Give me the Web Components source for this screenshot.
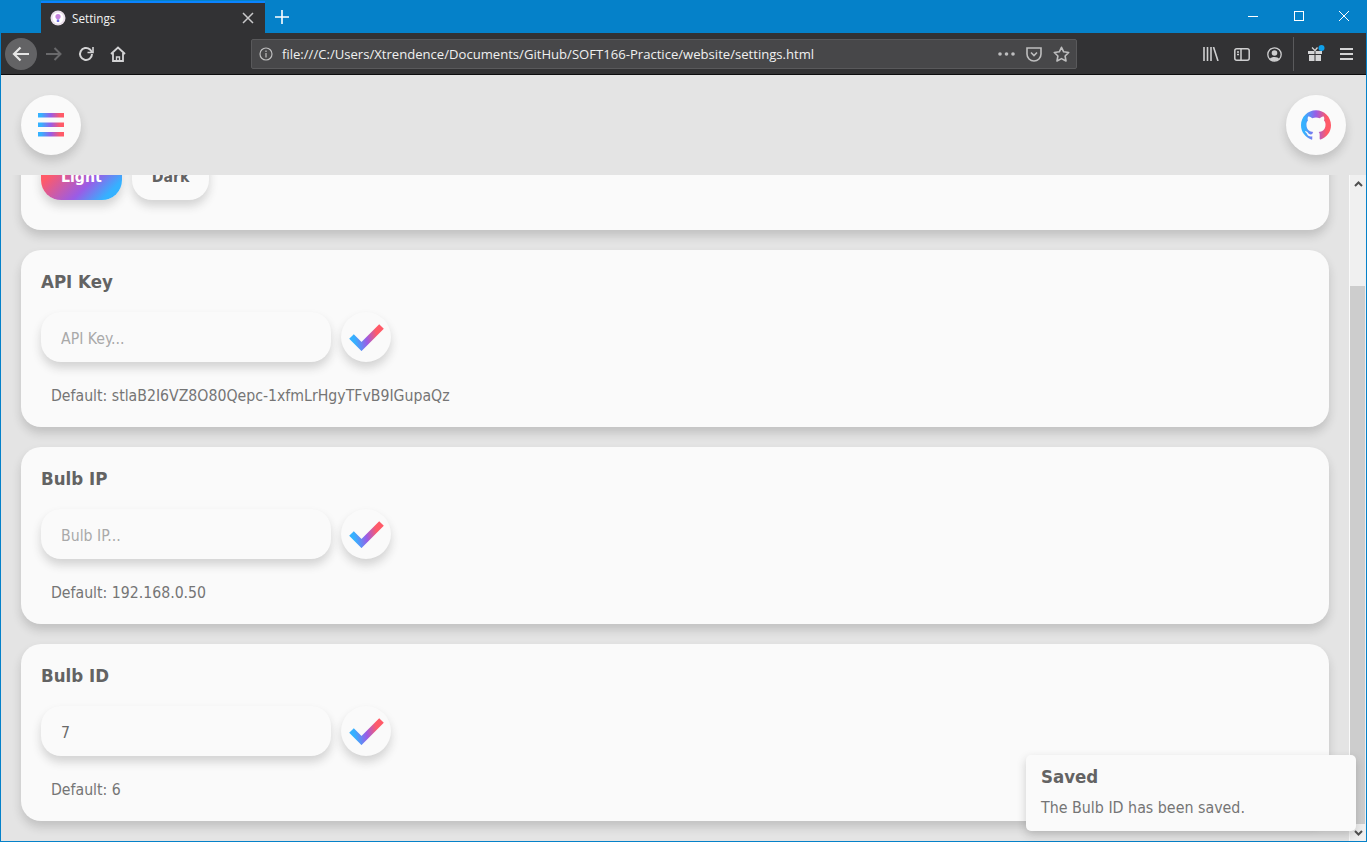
<!DOCTYPE html>
<html lang="en">
<head>
<meta charset="utf-8">
<title>Settings</title>
<style>
    html, body { margin: 0; height: 100%; overflow: hidden; }
    body { font-family: "DejaVu Sans", sans-serif; }
</style>
</head>
<body>

<browser-window>
    <browser-tabs title-text="Settings"></browser-tabs>
    <browser-toolbar url="file:///C:/Users/Xtrendence/Documents/GitHub/SOFT166-Practice/website/settings.html"></browser-toolbar>
    <app-header></app-header>
    <settings-page>
        <settings-card>
            <div class="buttons" style="display:flex;gap:10px">
                <theme-button active>Light</theme-button>
                <theme-button>Dark</theme-button>
            </div>
        </settings-card>
        <settings-card heading="API Key" placeholder="API Key..." hint="Default: stlaB2I6VZ8O80Qepc-1xfmLrHgyTFvB9IGupaQz"></settings-card>
        <settings-card heading="Bulb IP" placeholder="Bulb IP..." hint="Default: 192.168.0.50"></settings-card>
        <settings-card heading="Bulb ID" placeholder="Bulb ID..." value="7" hint="Default: 6"></settings-card>
    </settings-page>
    <toast-note heading="Saved">The Bulb ID has been saved.</toast-note>
</browser-window>

<script>
const FONT = `"DejaVu Sans", sans-serif`;
const GRADIENT_STOPS = `<stop offset=".12" stop-color="#35b1ff"/><stop offset=".5" stop-color="#9a5ce6"/><stop offset=".85" stop-color="#ff5a68"/>`;

class BrowserWindow extends HTMLElement {
    constructor() {
        super();
        this.attachShadow({ mode: 'open' });
        this.shadowRoot.innerHTML = `
        <style>
            :host {
                display: flex;
                flex-direction: column;
                position: relative;
                box-sizing: border-box;
                width: 1367px;
                height: 842px;
                padding: 0 1px 1px;
                background: #0581c9;
                overflow: hidden;
            }
        </style>
        <slot></slot>
        `;
    }
}

class BrowserTabs extends HTMLElement {
    constructor() {
        super();
        this.attachShadow({ mode: 'open' });
    }

    connectedCallback() {
        this.shadowRoot.innerHTML = `
        <style>
            :host {
                display: flex;
                flex: none;
                height: 33px;
                padding-left: 40px;
                font-family: "Open Sans", sans-serif;
                color: #fff;
            }
            .tab {
                display: flex;
                align-items: center;
                box-sizing: border-box;
                width: 224px;
                padding: 0 11px 0 9px;
                margin-top: 1px;
                background: #323234;
                border-top: 2px solid #0a84ff;
                font-size: 11.7px;
            }
            .favicon { width: 16px; height: 16px; margin-right: 6px; }
            .label { flex: 1; color: #f2f2f2; }
            .plus { margin-left: 10px; align-self: center; }
            .controls { display: flex; margin-left: auto; height: 33px; align-items: center; padding-right: 17px; gap: 35.5px; margin-top: -1px; }
            svg { display: block; }
        </style>
        <div class="tab">
            <svg class="favicon" viewBox="0 0 16 16">
                <circle cx="8" cy="8" r="7.5" fill="#eadfea"/>
                <circle cx="8" cy="8" r="5.5" fill="#fff"/>
                <circle cx="8" cy="6.6" r="2.6" fill="#c583dc"/>
                <rect x="6.8" y="9.4" width="2.4" height="2.6" fill="#6f6fe0"/>
            </svg>
            <span class="label">${this.getAttribute('title-text')}</span>
            <svg width="12" height="12" viewBox="0 0 12 12" stroke="#c9c9ca" stroke-width="1.5"><path d="M1 1l10 10M11 1L1 11"/></svg>
        </div>
        <svg class="plus" width="14" height="14" viewBox="0 0 14 14" stroke="#fff" stroke-width="1.6"><path d="M7 0v14M0 7h14"/></svg>
        <div class="controls">
            <svg width="10" height="10" viewBox="0 0 10 10" stroke="#fff"><path d="M0 5.5h10"/></svg>
            <svg width="10" height="10" viewBox="0 0 10 10" stroke="#fff" fill="none"><rect x=".5" y=".5" width="9" height="9"/></svg>
            <svg width="10" height="10" viewBox="0 0 10 10" stroke="#fff"><path d="M0 0l10 10M10 0L0 10"/></svg>
        </div>
        `;
    }
}

class BrowserToolbar extends HTMLElement {
    constructor() {
        super();
        this.attachShadow({ mode: 'open' });
    }

    connectedCallback() {
        this.shadowRoot.innerHTML = `
        <style>
            :host {
                display: flex;
                flex: none;
                align-items: center;
                box-sizing: border-box;
                height: 42px;
                padding: 1px 13px 0 4px;
                background: #323234;
                border-bottom: 1px solid #0c0c0d;
                font-family: "Open Sans", sans-serif;
                color: #bebebf;
            }
            svg { display: block; flex: none; }
            .back {
                display: flex;
                align-items: center;
                justify-content: center;
                width: 32px;
                height: 32px;
                border-radius: 50%;
                background: #636365;
                flex: none;
            }
            .nav { display: flex; align-items: center; gap: 16px; margin-left: 9px; width: 205px; flex: none; }
            .url {
                display: flex;
                align-items: center;
                box-sizing: border-box;
                flex: none;
                width: 826px;
                height: 30px;
                padding: 0 6px 0 7px;
                background: #474749;
                border: 1px solid #59595b;
                border-radius: 2px;
            }
            .address { flex: 1; margin-left: 9px; font-size: 13.1px; color: #f0f0f0; white-space: nowrap; }
            .page-actions { display: flex; align-items: center; gap: 11px; }
            .tools { display: flex; align-items: center; margin-left: auto; }
            .divider { width: 1px; height: 34px; background: #5a5a5c; margin: 0 13px 0 11px; }
        </style>
        <div class="back">
            <svg width="18" height="16" viewBox="0 0 18 16" fill="none" stroke="#e6e6e6" stroke-width="2.2"><path d="M17 8H2M8.5 1.5L2 8l6.5 6.5"/></svg>
        </div>
        <div class="nav">
            <svg width="16" height="14" viewBox="0 0 16 14" fill="none" stroke="#69696b" stroke-width="2"><path d="M0 7h14M8.5 1L14.5 7l-6 6"/></svg>
            <svg width="16" height="16" viewBox="0 0 16 16" fill="none" stroke="#d4d4d5" stroke-width="2"><path d="M14 8a6 6 0 1 1-2-4.500L14 6"/><path d="M15 1v5.500H9.500" stroke-width="1.600"/></svg>
            <svg width="16" height="16" viewBox="0 0 16 16" fill="none" stroke="#d4d4d5" stroke-width="1.800"><path d="M1 8l7-6.500L15 8M3 7v8h10V7"/><path d="M6.500 15v-4h3v4" stroke-width="1.400"/></svg>
        </div>
        <div class="url">
            <svg width="14" height="14" viewBox="0 0 14 14" fill="none" stroke="#bebebf" stroke-width="1.200"><circle cx="7" cy="7" r="6"/><path d="M7 6v4.500M7 3.500v1.500"/></svg>
            <span class="address">${this.getAttribute('url')}</span>
            <div class="page-actions">
                <svg width="17" height="4" viewBox="0 0 17 4" fill="#bebebf"><circle cx="2" cy="2" r="1.800"/><circle cx="8.500" cy="2" r="1.800"/><circle cx="15" cy="2" r="1.800"/></svg>
                <svg width="16" height="15" viewBox="0 0 16 15" fill="none" stroke="#bebebf" stroke-width="1.600"><path d="M1 1h14v6a7 7 0 0 1-14 0z"/><path d="M5 5.500l3 3 3-3"/></svg>
                <svg width="17" height="16" viewBox="0 0 17 16" fill="none" stroke="#bebebf" stroke-width="1.600" stroke-linejoin="round"><path d="M8.500 1.300l2.200 4.500 5 .7-3.600 3.500.9 5-4.500-2.400L4 15l.9-5L1.300 6.500l5-.7z"/></svg>
            </div>
        </div>
        <div class="tools">
            <svg width="16" height="14" viewBox="0 0 16 14" stroke="#cfcfd0" stroke-width="1.600" fill="none"><path d="M1 0v14M4.500 0v14M8 0v14M10.500 0l4.500 14"/></svg>
            <svg width="16" height="13" viewBox="0 0 16 13" fill="none" stroke="#cfcfd0" stroke-width="1.500" style="margin-left:15px"><rect x=".8" y=".8" width="14.400" height="11.400" rx="2"/><path d="M7 1v11M3 4h2M3 6.500h2"/></svg>
            <svg width="15" height="15" viewBox="0 0 15 15" style="margin-left:17px"><circle cx="7.500" cy="7.500" r="6.700" fill="none" stroke="#cfcfd0" stroke-width="1.300"/><circle cx="7.500" cy="6" r="2.800" fill="#cfcfd0"/><path d="M2.800 12c1-2.800 8.400-2.800 9.400 0a6.500 6.500 0 0 1-9.400 0z" fill="#cfcfd0"/></svg>
            <div class="divider"></div>
            <svg width="18" height="18" viewBox="0 0 18 18" style="margin-right:15px"><path d="M1 6h6.500v3H1zM8.500 6H15v3H8.500zM2 10h5.500v6H2zM8.500 10H14v6H8.500z" fill="#d4d4d5"/><path d="M5 2.500l3 3 2.500-3" fill="none" stroke="#d4d4d5" stroke-width="1.300"/><circle cx="14.500" cy="3" r="3" fill="#0fa0ea"/></svg>
            <svg width="13" height="12" viewBox="0 0 13 12" fill="#d4d4d5"><path d="M0 0h13v2H0zM0 5h13v2H0zM0 10h13v2H0z"/></svg>
        </div>
        `;
    }
}

class RoundButton extends HTMLElement {
    constructor() {
        super();
        this.attachShadow({ mode: 'open' });
        this.shadowRoot.innerHTML = `
        <style>
            :host {
                display: flex;
                align-items: center;
                justify-content: center;
                flex: none;
                box-sizing: border-box;
                width: var(--size, 60px);
                height: var(--size, 60px);
                border-radius: 50%;
                background: #fafafa;
                box-shadow: 0 6px 10px rgba(40,40,40,0.18);
            }
        </style>
        <slot></slot>
        `;
    }
}

class AppHeader extends HTMLElement {
    constructor() {
        super();
        this.attachShadow({ mode: 'open' });
        this.shadowRoot.innerHTML = `
        <style>
            :host {
                display: flex;
                flex: none;
                justify-content: space-between;
                box-sizing: border-box;
                height: 100px;
                padding: 20px;
                background: #e4e4e4;
            }
            svg { display: block; }
        </style>
        <round-button>
            <svg width="26" height="24" viewBox="0 0 26 24">
                <defs><linearGradient id="menu-grad">${GRADIENT_STOPS}</linearGradient></defs>
                <path d="M0 0h26v4.500H0zM0 9.500h26v4.500H0zM0 19h26v4.500H0z" fill="url(#menu-grad)"/>
            </svg>
        </round-button>
        <round-button>
            <svg width="30" height="30" viewBox="0 0 24 24">
                <defs><linearGradient id="git-grad">${GRADIENT_STOPS}</linearGradient></defs>
                <path fill="url(#git-grad)" d="M12 .297c-6.630 0-12 5.373-12 12 0 5.303 3.438 9.800 8.205 11.385.6.113.82-.258.82-.577 0-.285-.01-1.040-.015-2.040-3.338.724-4.042-1.610-4.042-1.610C4.422 18.070 3.633 17.700 3.633 17.700c-1.087-.744.084-.729.084-.729 1.205.084 1.838 1.236 1.838 1.236 1.070 1.835 2.809 1.305 3.495.998.108-.776.417-1.305.76-1.605-2.665-.3-5.466-1.332-5.466-5.930 0-1.310.465-2.380 1.235-3.220-.135-.303-.54-1.523.105-3.176 0 0 1.005-.322 3.300 1.230.96-.267 1.980-.399 3-.405 1.020.006 2.040.138 3 .405 2.280-1.552 3.285-1.230 3.285-1.230.645 1.653.24 2.873.12 3.176.765.84 1.230 1.910 1.230 3.220 0 4.610-2.805 5.625-5.475 5.920.42.36.81 1.096.81 2.220 0 1.606-.015 2.896-.015 3.286 0 .315.21.69.825.57C20.565 22.092 24 17.592 24 12.297c0-6.627-5.373-12-12-12"/>
            </svg>
        </round-button>
        `;
    }
}

class SettingsPage extends HTMLElement {
    constructor() {
        super();
        this.attachShadow({ mode: 'open' });
        this.shadowRoot.innerHTML = `
        <style>
            :host {
                display: flex;
                flex: 1;
                min-height: 0;
                background: #e4e4e4;
                overflow: hidden;
            }
            .scroller {
                flex: 1;
                min-width: 0;
                display: flex;
                flex-direction: column;
                justify-content: flex-end;
                gap: 20px;
                padding: 0 20px 20px;
            }
            .bar {
                display: flex;
                flex-direction: column;
                flex: none;
                width: 17px;
                background: #f0f0f0;
                border-left: 1px solid #fafafa;
                box-sizing: border-box;
            }
            .arrow { display: flex; align-items: center; justify-content: center; height: 17px; flex: none; }
            .space { flex: none; height: 94px; }
            .thumb { flex: 1; background: #cdcdcd; margin-right: 1px; }
            svg { display: block; }
        </style>
        <div class="scroller"><slot></slot></div>
        <div class="bar">
            <div class="arrow"><svg width="9" height="6" viewBox="0 0 9 6" fill="none" stroke="#505050" stroke-width="2"><path d="M1 5l3.500-3.500L8 5"/></svg></div>
            <div class="space"></div>
            <div class="thumb"></div>
            <div class="arrow"><svg width="9" height="6" viewBox="0 0 9 6" fill="none" stroke="#505050" stroke-width="2"><path d="M1 1l3.500 3.500L8 1"/></svg></div>
        </div>
        `;
    }
}

class SettingsCard extends HTMLElement {
    constructor() {
        super();
        this.attachShadow({ mode: 'open' });
    }

    connectedCallback() {
        const heading = this.getAttribute('heading');
        const tickId = heading ? 'tick-' + heading.replace(/\W/g, '') : '';
        const body = heading ? `
            <div class="title">${heading}</div>
            <div class="row">
                <input type="text" placeholder="${this.getAttribute('placeholder')}" value="${this.getAttribute('value') || ''}" spellcheck="false">
                <round-button style="--size:50px">
                    <svg width="36" height="28" viewBox="0 0 36 28">
                        <defs><linearGradient id="${tickId}" gradientUnits="userSpaceOnUse" x1="2" y1="14" x2="33" y2="8">${GRADIENT_STOPS}</linearGradient></defs>
                        <path d="M3.500 13.500l10 10L33.500 3.500" fill="none" stroke="url(#${tickId})" stroke-width="6.500"/>
                    </svg>
                </round-button>
            </div>
            <div class="hint">${this.getAttribute('hint')}</div>
        ` : `<slot></slot>`;

        this.shadowRoot.innerHTML = `
        <style>
            :host {
                display: block;
                flex: none;
                box-sizing: border-box;
                padding: 20px 20px 21px;
                background: #fafafa;
                border-radius: 20px;
                box-shadow: 0 6px 10px rgba(40,40,40,0.18);
                font-family: ${FONT};
                font-stretch: condensed;
            }
            :host(:not([heading])) { padding-bottom: 30px; }
            .title { font-size: 18.5px; line-height: 24px; font-weight: bold; color: #636363; }
            .row { display: flex; gap: 10px; margin-top: 18px; }
            input {
                box-sizing: border-box;
                width: 290px;
                height: 50px;
                padding: 2px 20px 0;
                border: none;
                outline: none;
                border-radius: 20px;
                background: #fafafa;
                box-shadow: 0 6px 10px rgba(40,40,40,0.18);
                font: inherit;
                font-size: 15.7px;
                color: #6a6a6a;
            }
            input::placeholder { color: #a9a9a9; opacity: 1; }
            .hint { margin: 24px 0 0 10px; font-size: 15.7px; line-height: 20px; color: #757575; white-space: nowrap; }
            svg { display: block; }
        </style>
        ${body}
        `;
    }
}

class ThemeButton extends HTMLElement {
    constructor() {
        super();
        this.attachShadow({ mode: 'open' });
        this.shadowRoot.innerHTML = `
        <style>
            :host {
                display: flex;
                align-items: center;
                justify-content: center;
                box-sizing: border-box;
                height: 50px;
                padding: 2px 20px 0;
                border-radius: 20px;
                background: #fafafa;
                box-shadow: 0 6px 10px rgba(40,40,40,0.18);
                font-size: 15.7px;
                font-weight: bold;
                color: #636363;
            }
            :host([active]) {
                background: linear-gradient(135deg, #ff5a68 25%, #9a5ce6 62%, #35b1ff 85%);
                color: #fff;
            }
        </style>
        <slot></slot>
        `;
    }
}

class ToastNote extends HTMLElement {
    constructor() {
        super();
        this.attachShadow({ mode: 'open' });
    }

    connectedCallback() {
        this.shadowRoot.innerHTML = `
        <style>
            :host {
                display: block;
                position: absolute;
                right: 11px;
                bottom: 11px;
                box-sizing: border-box;
                width: 330px;
                height: 76px;
                padding: 11px 15px;
                background: #fafafa;
                border-radius: 5px;
                box-shadow: 0 4px 10px rgba(40,40,40,0.22);
                font-family: ${FONT};
                font-stretch: condensed;
            }
            .title { font-size: 18.500px; line-height: 22px; font-weight: bold; color: #636363; }
            .text { margin-top: 10px; font-size: 15.85px; line-height: 20px; color: #757575; }
        </style>
        <div class="title">${this.getAttribute('heading')}</div>
        <div class="text"><slot></slot></div>
        `;
    }
}

customElements.define('browser-window', BrowserWindow);
customElements.define('browser-tabs', BrowserTabs);
customElements.define('browser-toolbar', BrowserToolbar);
customElements.define('round-button', RoundButton);
customElements.define('app-header', AppHeader);
customElements.define('settings-page', SettingsPage);
customElements.define('settings-card', SettingsCard);
customElements.define('theme-button', ThemeButton);
customElements.define('toast-note', ToastNote);
</script>
</body>
</html>
